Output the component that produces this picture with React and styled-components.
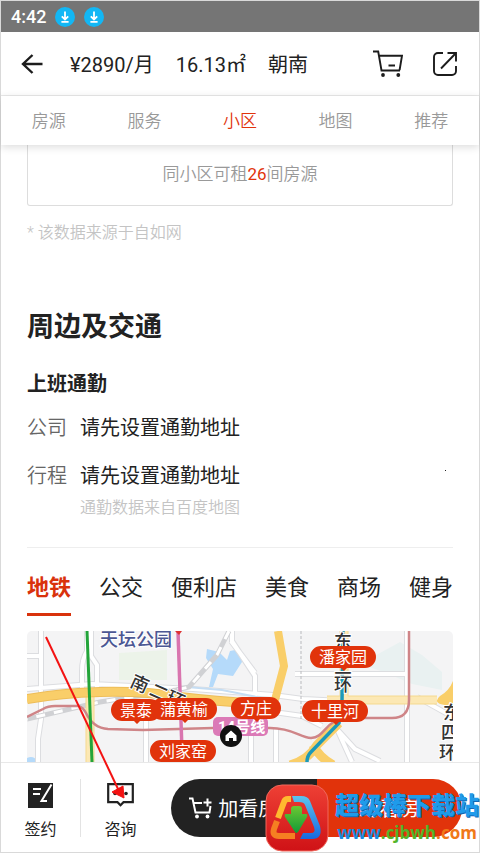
import React from 'react';
import styled, { createGlobalStyle } from 'styled-components';

const GlobalStyle = createGlobalStyle`
  * {
    box-sizing: border-box;
  }

  body {
    margin: 0;
    background: #fff;
    color: #222;
    font-family: Roboto, 'Noto Sans CJK SC', sans-serif;
  }

  button {
    padding: 0;
    border: none;
    background: none;
    color: inherit;
    font: inherit;
    cursor: pointer;
  }
`;

const sections = ['房源', '服务', '小区', '地图', '推荐'];
const places = ['地铁', '公交', '便利店', '美食', '商场', '健身'];

const stations = [
  { name: '潘家园', x: 316, y: 26 },
  { name: '景泰', x: 109, y: 79 },
  { name: '蒲黄榆', x: 157, y: 78 },
  { name: '方庄', x: 229, y: 77 },
  { name: '十里河', x: 308, y: 80 },
  { name: '刘家窑', x: 156, y: 120 },
];

const roads = 'M14 0v88l-3 20v23M0 25h14M60 0v20q-5 8-5 20v18M64 0v25l6 9v26M119 90v41M0 58l65-5 101 5 80 6 30 4 40 2M205 0v10l23 35v20M204 10l24 32M268 43h112M225 78l50 7 20 10M310 98l15 33M308 96l20 22 25 12M224 98v33M249 98v33M380 0v131M390 66l36 20';

const Download = () => (
  <svg width="20" height="20" viewBox="0 0 20 20">
    <circle cx="10" cy="10" r="10" fill="#12b7f5" />
    <path d="M10 4.5v8M6.8 9.3l3.2 3.2 3.2-3.2M6.4 14.8h7.2" fill="none" stroke="#fff" strokeWidth="1.8" />
  </svg>
);

const BackIcon = () => (
  <svg width="22" height="20" viewBox="0 0 22 20" fill="none" stroke="#1c1c1c" strokeWidth="2.4">
    <path d="M21.500 10H2M11.500 1L2 10l9.500 9" />
  </svg>
);

const CartIcon = () => (
  <svg width="30" height="27" viewBox="0 0 30 27" fill="none" stroke="#1c1c1c" strokeWidth="1.9">
    <path d="M0 1.500h5.200L8.500 20.500h18.500M6 5.700h23L26.600 20M15.500 15.500H22" />
    <circle cx="10" cy="25" r="1.9" fill="#1c1c1c" stroke="none" />
    <circle cx="25.300" cy="25" r="1.9" fill="#1c1c1c" stroke="none" />
  </svg>
);

const ShareIcon = () => (
  <svg width="24" height="24" viewBox="0 0 24 24" fill="none" stroke="#1c1c1c" strokeWidth="1.9">
    <path d="M10 1H5a4 4 0 0 0-4 4v14a4 4 0 0 0 4 4h14a4 4 0 0 0 4-4v-5M14.500 1H23v8.500M23 1L8 16.500" />
  </svg>
);

const SignIcon = () => (
  <svg width="25" height="25" viewBox="0 0 25 25">
    <path fill="#222" d="M0 0h25v25H0z" />
    <path d="M5 6h8M5 11h7M23.500 1.500L13.500 18H19" fill="none" stroke="#fff" strokeWidth="2" />
  </svg>
);

const ChatIcon = () => (
  <svg width="27" height="24" viewBox="0 0 27 24">
    <path d="M1.200 1.200h24.600v18h-9.300l-3 3-3-3H1.200z" fill="#fff" stroke="#222" strokeWidth="2.2" />
    <circle cx="8" cy="10.500" r="1.8" fill="#222" />
    <circle cx="19" cy="10.500" r="1.8" fill="#222" />
  </svg>
);

const AddCartIcon = () => (
  <svg width="24" height="22" viewBox="0 0 24 22" fill="none" stroke="#fff" strokeWidth="2">
    <path d="M0 1.500h3.500L6.500 15.500h14L21.500 9M5 6h8M14.500 5.500h8M18.500 1.500v8" />
    <circle cx="8" cy="19.500" r="1.9" fill="#fff" stroke="none" />
    <circle cx="18.500" cy="19.500" r="1.9" fill="#fff" stroke="none" />
  </svg>
);

const MapDrawing = () => (
  <svg width="426" height="131" viewBox="0 0 426 131" fill="none">
    <path fill="#f4f4f5" d="M0 0h426v131H0z" />
    <path fill="#ecf3e9" d="M92 22l48-3v30H92z" />
    <path fill="#e9f1f1" d="M333 33l40-22 22 13 20 17v18l-30-6-28-12z" />
    <path fill="#b5dafa" d="M180 18l12 3 8 8 3-9 10-2 2 13-9 14-15-2-5 13h-4l4-18-7-11zM0 127q7-3 11 4H0z" />
    <path d={roads} stroke="#dcdde0" strokeWidth="6" />
    <path d={roads} stroke="#fff" strokeWidth="4" />
    <path d="M160 56l35 3 40 8" stroke="#c5ddf3" strokeWidth="2" />
    <path d="M202 0l-12 24-28 32-13 3-76 12-73 17" stroke="#d0d1d4" strokeWidth="5" />
    <path d="M202 0l-12 24-28 32-13 3-76 12-73 17" stroke="#fff" strokeWidth="3" strokeDasharray="9 9" />
    <path d="M274 0v89" stroke="#b9babe" strokeWidth="1" strokeDasharray="3 2" />
    <path d="M63 66v65M317 0v72M300 69h110" stroke="#f5d98f" strokeWidth="9" />
    <path d="M63 66v65M317 0v72M300 69h110" stroke="#fce8b4" strokeWidth="7" />
    <path d="M0 68q35-6 73-7 45-1 80 5 45 5 97 8" stroke="#eebd58" strokeWidth="10" />
    <path d="M0 68q35-6 73-7 45-1 80 5 45 5 97 8M251 0l6 35-9 34" stroke="#f9ce69" strokeWidth="8" />
    <path d="M426 50q-4 10-13 15-6 5 0 8 10 2 13 4z" fill="#f9ce69" />
    <path d="M263 134q18-5 27-20l22-22M286 114q6 12 20 20" stroke="#f9ce69" strokeWidth="9" />
    <path d="M0 86l16-8q5-3 12-3h23q5 1 8 7 7 15 22 16l35 1 70-2h57c24 0 30 10 41 10 12-1 12-10 24-17M315 87h50q17 0 17-18V0" stroke="#cf8588" strokeWidth="2.5" />
    <path d="M60 0l5 131" stroke="#23a43a" strokeWidth="3" />
    <path d="M151 0l4 120" stroke="#d975af" strokeWidth="3.500" />
    <path d="M148 0h7l-3 4z" fill="#d33" />
    <path d="M316 0l-1 70-3 22-28 29q-4 4-4 10" stroke="#1b99b9" strokeWidth="3.500" />
    <g fontFamily="'Noto Sans CJK SC', sans-serif" fontWeight="500" fill="#333" stroke="#fff" strokeWidth="2" paintOrder="stroke">
      <text x="73" y="15" fontSize="18" fill="#4c5793">天坛公园</text>
      <text x="102 123 141" y="55" fontSize="18" transform="rotate(24 102 55)">南二环</text>
      <text x="307" y="17" fontSize="18">东</text>
      <text x="307" y="42" fontSize="18">三</text>
      <text x="307" y="60" fontSize="18">环</text>
      <text x="416" y="88" fontSize="18">东</text>
      <text x="414" y="108" fontSize="18">四</text>
      <text x="412" y="128" fontSize="18">环</text>
    </g>
    <rect x="186" y="86" width="55" height="19" rx="5" fill="#db7ab7" />
    <text x="191" y="101" fontSize="15" fontWeight="700" fill="#fff" fontFamily="Roboto, 'Noto Sans CJK SC', sans-serif">14号线</text>
    {stations.map(({ name, x, y }) => (
      <g key={name}>
        <path
          d={`M${x - (name.length * 8 + 9) + 11} ${y - 11}h${name.length * 16 - 4}a11 11 0 0 1 0 22h-${name.length * 8 - 6}l-3 3-3-3h-${name.length * 8 - 4}a11 11 0 0 1 0-22z`}
          fill="#e1330b"
        />
        <text x={x} y={y + 6} fontSize="16" textAnchor="middle" fill="#fff" fontFamily="'Noto Sans CJK SC', sans-serif">{name}</text>
      </g>
    ))}
    <circle cx="204" cy="105" r="11" fill="#111" />
    <path d="M198.500 104.500L204 99.500l5.500 5V110h-3.500v-3h-4v3h-3.500z" fill="#fff" />
  </svg>
);

const Pointer = () => (
  <svg width="82" height="165" viewBox="0 0 82 165">
    <path d="M1 1l73 154" stroke="#f31212" strokeWidth="2" />
    <path d="M79 162L67 156l11-6z" fill="#f31212" stroke="#f31212" />
  </svg>
);

const Logo = () => (
  <svg width="64" height="68" viewBox="0 0 64 68" fill="none">
    <defs>
      <linearGradient id="tile" x2="0" y2="1">
        <stop stopColor="#ee4035" />
        <stop offset="1" stopColor="#cf1216" />
      </linearGradient>
      <linearGradient id="leaf" x2="0" y2="1">
        <stop stopColor="#6cc832" />
        <stop offset="1" stopColor="#119a37" />
      </linearGradient>
      <linearGradient id="ring" x2="0" y2="1">
        <stop stopColor="#5cc3ee" />
        <stop offset="1" stopColor="#1769e0" />
      </linearGradient>
    </defs>
    <rect x="1" y="1" width="62" height="66" rx="16" fill="url(#tile)" stroke="#f0685c" />
    <path d="M26 15h-3q-3 0-4 3l-6 16" stroke="#ffb92f" strokeWidth="6" />
    <path d="M12 37l-3 8q-2 7 5 7h16" stroke="#f57f22" strokeWidth="6" />
    <path d="M27 12h9q7 0 9 5l10 25q3 13-8 13H35l3-6h8q5 0 3-6l-9-22q-1-3-6-3h-5z" fill="url(#ring)" />
    <path d="M26 25q0-3 3-3h5q3 0 3 3v5h4q2 0 1 3L33 48q-2 2-3 0L20 33q-1-3 1-3h5z" fill="url(#leaf)" />
  </svg>
);

function App() {
  return (
    <Phone>
      <GlobalStyle />
      <StatusBar>
        4:42
        <Download />
        <Download />
      </StatusBar>
      <Header>
        <button aria-label="返回"><BackIcon /></button>
        <Summary>
          <span>¥2890/月</span>
          <span>16.13㎡</span>
          <span>朝南</span>
        </Summary>
        <HeaderActions>
          <button aria-label="购物车"><CartIcon /></button>
          <button aria-label="分享"><ShareIcon /></button>
        </HeaderActions>
      </Header>
      <SectionNav>
        {sections.map((name) => (
          <SectionTab key={name} $active={name === '小区'}>{name}</SectionTab>
        ))}
      </SectionNav>
      <Content>
        <CountCard>
          <span>同小区可租<Count>26</Count>间房源</span>
        </CountCard>
        <Note>* 该数据来源于自如网</Note>
        <Title>周边及交通</Title>
        <Subtitle>上班通勤</Subtitle>
        <CommuteList>
          <dt>公司</dt>
          <dd>请先设置通勤地址</dd>
          <dt>行程</dt>
          <dd>
            <Trip>请先设置通勤地址<Dot /></Trip>
            <Source>通勤数据来自百度地图</Source>
          </dd>
        </CommuteList>
        <PlaceNav>
          {places.map((name) => (
            <PlaceTab key={name} $active={name === '地铁'}>{name}</PlaceTab>
          ))}
        </PlaceNav>
        <MapBox><MapDrawing /></MapBox>
      </Content>
      <BottomBar>
        <Action><SignIcon />签约</Action>
        <Divider />
        <Action><ChatIcon />咨询</Action>
        <Booking>
          <BookButton><AddCartIcon />加看房单</BookButton>
          <BookButton $primary>约看房</BookButton>
        </Booking>
        <PointerLayer><Pointer /></PointerLayer>
        <Watermark>
          <Logo />
          <SiteText>
            <SiteName>超级棒下载站</SiteName>
            <SiteUrl><Blue>www</Blue><Green>.cjbwh</Green><Orange>.com</Orange></SiteUrl>
          </SiteText>
        </Watermark>
      </BottomBar>
    </Phone>
  );
}

export default App;

const Phone = styled.div`
  border: 1px solid #d9d9d9;
  background: #fff;
`;

const StatusBar = styled.div`
  display: flex;
  align-items: center;
  gap: 9px;
  height: 31px;
  padding-left: 10px;
  background: #757575;
  color: #fff;
  font-size: 18px;
  font-weight: 500;
`;

const Header = styled.header`
  display: flex;
  align-items: center;
  gap: 27px;
  height: 64px;
  padding: 0 22px 0 20px;
  border-bottom: 1px solid #eaeaea;

  svg {
    display: block;
  }
`;

const Summary = styled.div`
  display: flex;
  flex: 1;
  gap: 22px;
  font-size: 20px;
`;

const HeaderActions = styled.div`
  display: flex;
  align-items: center;
  gap: 30px;
`;

const SectionNav = styled.nav`
  position: relative;
  display: flex;
  height: 49px;
  background: #fff;
  box-shadow: 0 2px 8px rgba(0, 0, 0, .14);
`;

const SectionTab = styled.button`
  flex: 1;
  padding-bottom: 2px;
  color: ${props => props.$active ? '#e1330b' : '#999'};
  font-size: 17px;
  font-weight: 350;
`;

const Content = styled.main`
  padding: 0 26px;
`;

const CountCard = styled.div`
  display: flex;
  align-items: center;
  justify-content: center;
  height: 61px;
  padding-bottom: 5px;
  border: 1px solid #ddd;
  border-top: none;
  border-radius: 0 0 3px 3px;
  color: #999;
  font-size: 17px;
  font-weight: 350;
`;

const Count = styled.span`
  color: #e1330b;
  font-weight: 400;
`;

const Note = styled.p`
  margin: 15px 0 0;
  color: #c4c4c4;
  font-size: 16px;
  font-weight: 350;
  line-height: 24px;
`;

const Title = styled.h2`
  margin: 62px 0 0;
  font-size: 27px;
  line-height: 40px;
`;

const Subtitle = styled.h3`
  margin: 22px 0 0;
  font-size: 20px;
  line-height: 30px;
`;

const CommuteList = styled.dl`
  display: grid;
  grid-template-columns: 53px 1fr;
  row-gap: 18px;
  margin: 14px 0 0;
  padding-bottom: 27px;
  border-bottom: 1px solid #eee;
  font-size: 20px;
  line-height: 30px;

  dt {
    color: #666;
    font-weight: 350;
  }

  dd {
    margin: 0;
  }
`;

const Trip = styled.div`
  display: flex;
  justify-content: space-between;
`;

const Dot = styled.span`
  width: 1px;
  height: 1px;
  margin: 9px 7px 0 0;
  background: #222;
`;

const Source = styled.div`
  margin-top: 5px;
  color: #c4c4c4;
  font-size: 16px;
  font-weight: 350;
  line-height: 24px;
`;

const PlaceNav = styled.nav`
  display: flex;
  gap: 28px;
  margin-top: 18px;
  overflow: hidden;
`;

const PlaceTab = styled.button`
  flex: none;
  height: 50px;
  padding-bottom: 9px;
  border-bottom: 3px solid ${props => props.$active ? '#d9320c' : 'transparent'};
  color: ${props => props.$active ? '#d9320c' : '#222'};
  font-size: 22px;
  font-weight: ${props => props.$active ? 700 : 400};
`;

const MapBox = styled.div`
  height: 131px;
  margin-top: 15px;
  overflow: hidden;
  border-radius: 5px 5px 0 0;
`;

const BottomBar = styled.footer`
  position: relative;
  display: flex;
  align-items: center;
  height: 90px;
  padding-right: 17px;
  border-top: 1px solid #e8e8e8;
`;

const Action = styled.button`
  display: flex;
  flex-direction: column;
  align-items: center;
  justify-content: space-between;
  width: 79px;
  height: 64px;
  padding-top: 7px;
  font-size: 16px;
  line-height: 20px;
`;

const Divider = styled.div`
  width: 1px;
  height: 58px;
  background: #e3e3e3;
`;

const Booking = styled.div`
  display: flex;
  flex: 1;
  height: 58px;
  margin-left: 11px;
  overflow: hidden;
  border-radius: 29px;
`;

const BookButton = styled.button`
  display: flex;
  flex: 1;
  align-items: center;
  justify-content: center;
  gap: 5px;
  background: ${props => props.$primary ? '#e1330b' : '#222'};
  color: #fff;
  font-size: 20px;
`;

const PointerLayer = styled.div`
  position: absolute;
  left: 44px;
  bottom: 51px;
  pointer-events: none;

  svg {
    display: block;
  }
`;

const Watermark = styled.div`
  position: absolute;
  right: 0;
  bottom: 0;
  display: flex;
  align-items: center;
  gap: 6px;
  pointer-events: none;

  svg {
    display: block;
  }
`;

const SiteText = styled.div`
  text-align: center;
`;

const SiteName = styled.div`
  color: #1f9bea;
  font-size: 24px;
  font-weight: 900;
  line-height: 30px;
  text-shadow: 1px 1px 0 #1268b5;
`;

const SiteUrl = styled.div`
  font-family: 'Open Sans', sans-serif;
  font-size: 17px;
  font-weight: 700;
  line-height: 24px;
`;

const Blue = styled.span`
  color: #168be0;
`;

const Green = styled.span`
  color: #52b52a;
`;

const Orange = styled.span`
  color: #f07818;
`;
